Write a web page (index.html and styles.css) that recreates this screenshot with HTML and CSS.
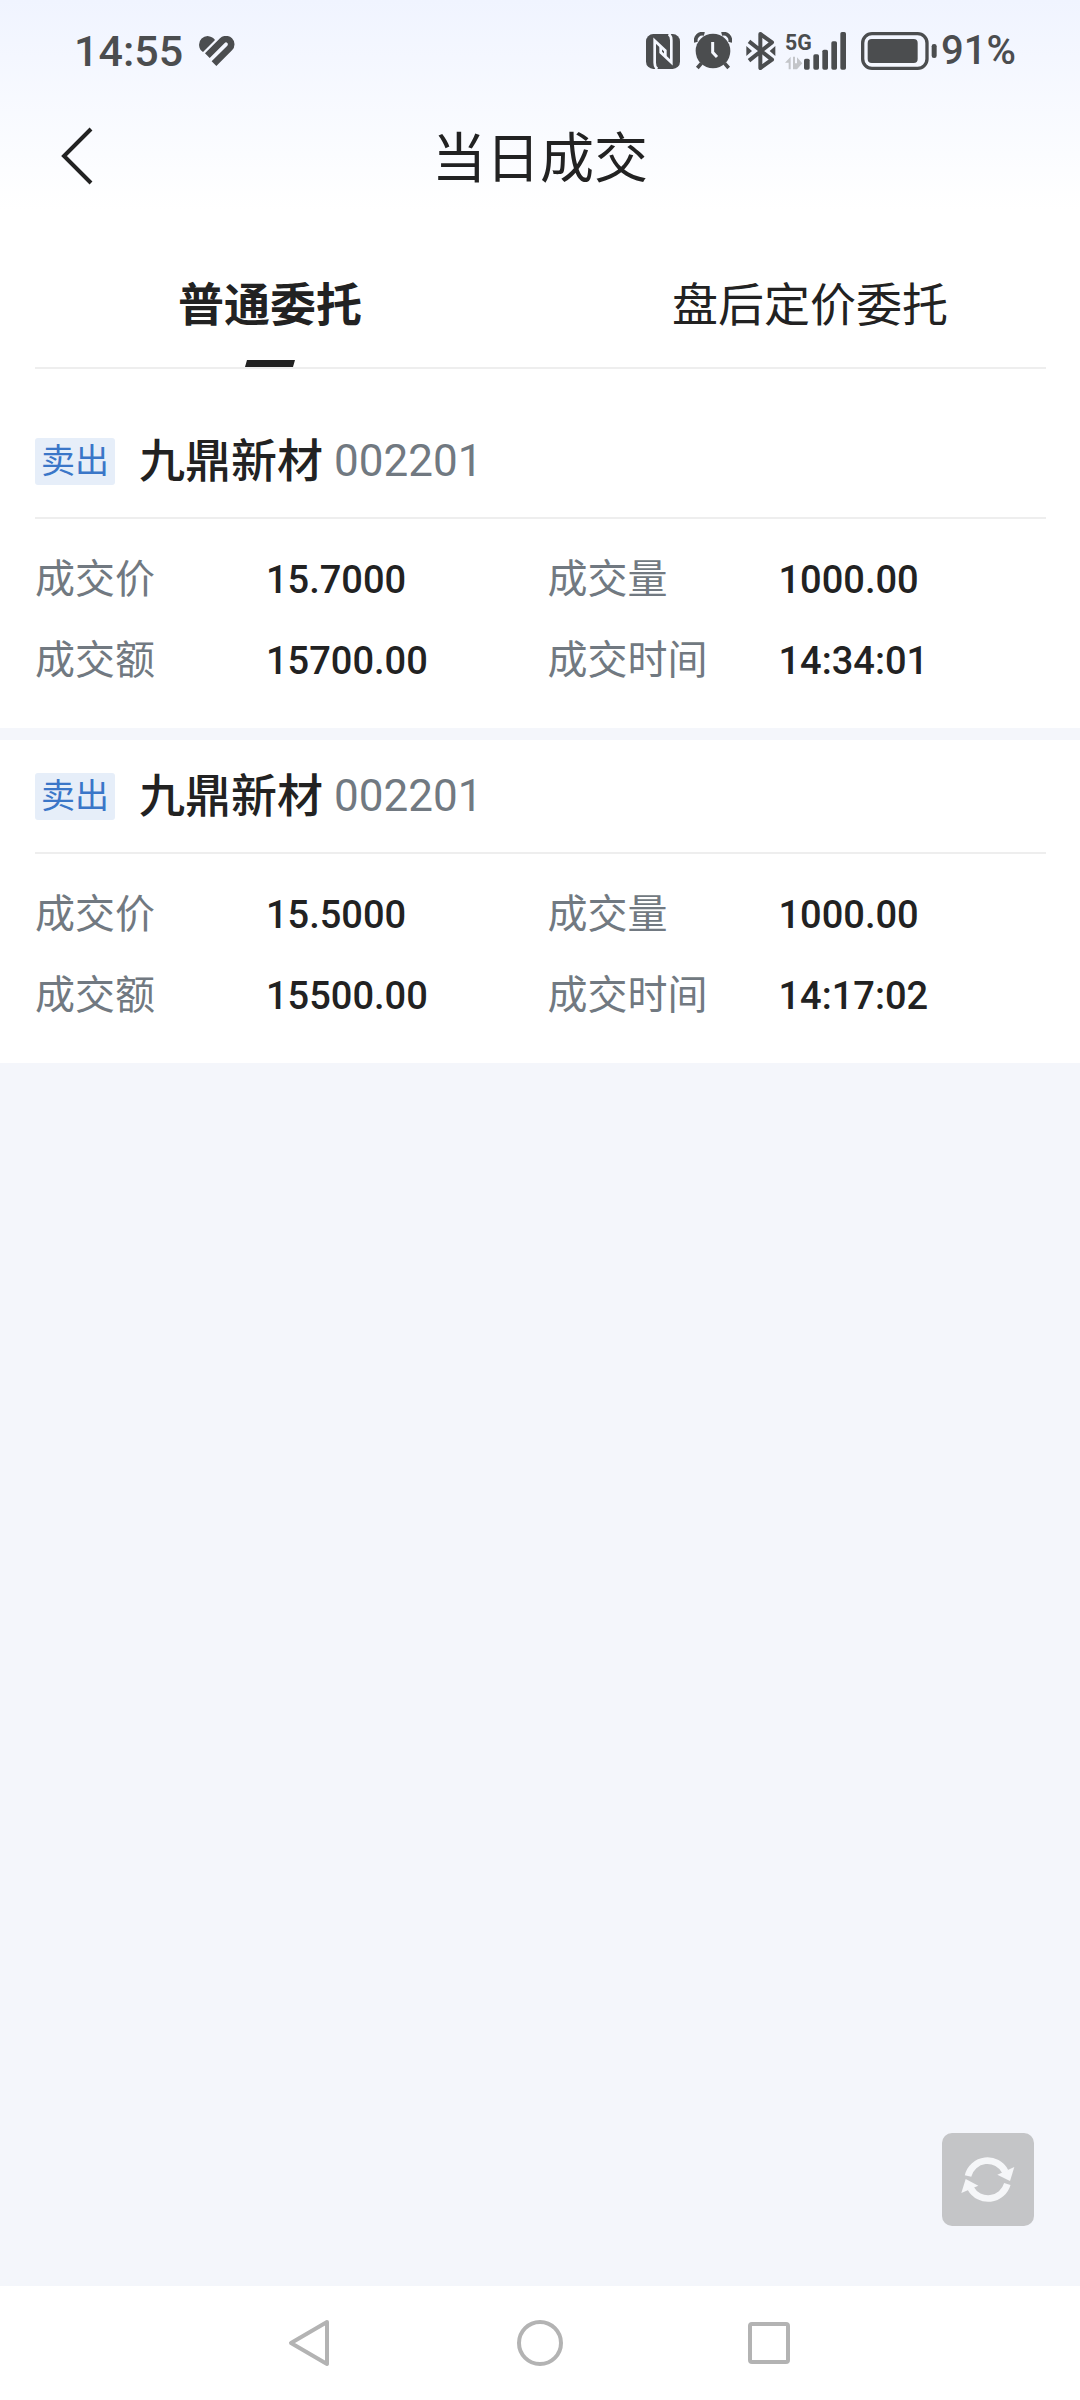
FILE: index.html
```html
<!DOCTYPE html>
<html lang="zh-CN">
<head>
    <meta charset="UTF-8">
    <meta name="viewport" content="width=device-width, initial-scale=1">
    <title>当日成交</title>
    <link rel="stylesheet" href="styles.css">
</head>
<body>
    <header class="top">
        <div class="status-bar">
            <div class="status-left">
                <span class="status-text">14:55</span>
                <svg class="icon-health" width="36" height="31" viewBox="0 0 108 93">
                    <path d="M12 48 A26 26 0 1 1 48 12 Z" fill="#4b4d4f"/>
                    <path d="M25 59 L70 14 A15.5 15.5 0 0 1 92 36 L45 83" fill="none" stroke="#4b4d4f" stroke-width="20"/>
                </svg>
            </div>
            <div class="status-right">
                <svg class="icon-nfc" width="34" height="35" viewBox="0 0 102 105">
                    <rect x="0" y="0" width="102" height="105" rx="22" fill="#4b4d4f"/>
                    <path d="M34 105 Q26 100 26 86 V20 L58 50 V68" fill="none" stroke="#f5f8ff" stroke-width="8"/>
                    <path d="M68 0 Q76 5 76 19 V85 L44 55 V37" fill="none" stroke="#f5f8ff" stroke-width="8"/>
                </svg>
                <svg class="icon-alarm" width="38" height="38" viewBox="0 0 114 114">
                    <circle cx="57" cy="57" r="52" fill="#4b4d4f"/>
                    <path d="M3 33 A20 20 0 0 1 33 3 M81 3 A20 20 0 0 1 111 33" fill="none" stroke="#f5f8ff" stroke-width="18"/>
                    <path d="M6 31 A20 20 0 0 1 31 6 M83 6 A20 20 0 0 1 108 31" fill="none" stroke="#4b4d4f" stroke-width="11"/>
                    <path d="M22 94 L10 108 M92 94 L104 108" stroke="#4b4d4f" stroke-width="11"/>
                    <path d="M56 30 V61 L69 75" fill="none" stroke="#f5f8ff" stroke-width="9"/>
                </svg>
                <svg class="icon-bluetooth" width="30" height="38" viewBox="0 0 90 114">
                    <path d="M9 28 L78 83 L43 108 V6 L78 31 L9 86" fill="none" stroke="#4b4d4f" stroke-width="12" stroke-linejoin="round"/>
                    <path d="M1 42 L18 57 L1 72 Z M88 42 L71 57 L88 72 Z" fill="#4b4d4f"/>
                </svg>
                <svg class="icon-signal" width="62" height="38" viewBox="0 0 186 114">
                    <text x="0" y="54" class="signal-label">5G</text>
                    <path d="M0 92 L17 74 V112 H11 V92 Z M24 74 H30 V94 H36 V76 L52 94 L36 112 H24 Z" fill="#c3c5c9"/>
                    <g fill="#4b4d4f">
                        <rect x="57" y="80" width="17" height="33" rx="5"/>
                        <rect x="85" y="67" width="17" height="46" rx="5"/>
                        <rect x="112" y="53" width="17" height="60" rx="5"/>
                        <rect x="139" y="28" width="17" height="85" rx="5"/>
                        <rect x="166" y="0" width="17" height="113" rx="5"/>
                    </g>
                </svg>
                <svg class="icon-battery" width="76" height="38" viewBox="0 0 228 114">
                    <rect x="5" y="5" width="193" height="104" rx="28" fill="none" stroke="#4b4d4f" stroke-width="10"/>
                    <rect x="20" y="21" width="150" height="72" rx="12" fill="#4b4d4f"/>
                    <rect x="212" y="36" width="15" height="42" rx="7" fill="#4b4d4f"/>
                </svg>
                <span class="status-text battery-text">91%</span>
            </div>
        </div>
        <div class="title-bar">
            <button class="back-btn" aria-label="返回">
                <svg width="34" height="58" viewBox="0 0 34 58">
                    <path d="M31 2 L4 29 L31 56" fill="none" stroke="#222" stroke-width="4"/>
                </svg>
            </button>
            <h1>当日成交</h1>
        </div>
    </header>

    <nav class="tabs">
        <button class="tab active">普通委托</button>
        <button class="tab">盘后定价委托</button>
    </nav>
    <hr class="line">

    <main class="content">
        <section class="card">
            <h2 class="card-head">
                <span class="badge">卖出</span>
                <span class="name">九鼎新材</span>
                <span class="code">002201</span>
            </h2>
            <dl class="details">
                <div class="item"><dt>成交价</dt><dd>15.7000</dd></div>
                <div class="item"><dt>成交量</dt><dd>1000.00</dd></div>
                <div class="item"><dt>成交额</dt><dd>15700.00</dd></div>
                <div class="item"><dt>成交时间</dt><dd>14:34:01</dd></div>
            </dl>
        </section>
        <section class="card">
            <h2 class="card-head">
                <span class="badge">卖出</span>
                <span class="name">九鼎新材</span>
                <span class="code">002201</span>
            </h2>
            <dl class="details">
                <div class="item"><dt>成交价</dt><dd>15.5000</dd></div>
                <div class="item"><dt>成交量</dt><dd>1000.00</dd></div>
                <div class="item"><dt>成交额</dt><dd>15500.00</dd></div>
                <div class="item"><dt>成交时间</dt><dd>14:17:02</dd></div>
            </dl>
        </section>
        <button class="refresh-btn" aria-label="刷新">
            <svg width="54" height="48" viewBox="0 0 162 144">
                <path d="M21 60 A60 60 0 0 1 133 47" fill="none" stroke="#f5f6f8" stroke-width="20"/>
                <path d="M109 56 L160 33 L147 75 Z" fill="#f5f6f8"/>
                <path d="M139 84 A60 60 0 0 1 29 97" fill="none" stroke="#f5f6f8" stroke-width="20"/>
                <path d="M52 89 L1 111 L14 69 Z" fill="#f5f6f8"/>
            </svg>
        </button>
    </main>

    <nav class="system-nav">
        <button aria-label="返回">
            <svg width="48" height="48" viewBox="0 0 48 48">
                <path d="M40 3 L4 24 L40 45 Z" fill="none" stroke="#b3b3b3" stroke-width="4" stroke-linejoin="round"/>
            </svg>
        </button>
        <button aria-label="主页">
            <svg width="48" height="48" viewBox="0 0 48 48">
                <circle cx="24" cy="24" r="21" fill="none" stroke="#b3b3b3" stroke-width="4"/>
            </svg>
        </button>
        <button aria-label="最近任务">
            <svg width="48" height="48" viewBox="0 0 48 48">
                <rect x="5" y="5" width="38" height="38" rx="2" fill="none" stroke="#b3b3b3" stroke-width="4"/>
            </svg>
        </button>
    </nav>
</body>
</html>
```
FILE: styles.css
```css
* {
    box-sizing: border-box;
}
body {
    display: flex;
    flex-direction: column;
    min-height: 100vh;
    margin: 0;
    font-family: Roboto, "Noto Sans CJK SC", sans-serif;
    color: #222;
    background: #fff;
}
button {
    padding: 0;
    border: none;
    background: none;
    font-family: inherit;
    color: inherit;
    cursor: pointer;
}
svg {
    display: block;
}
.top {
    background: linear-gradient(#f0f4ff, #fff);
}
.status-bar {
    display: flex;
    justify-content: space-between;
    align-items: center;
    height: 102px;
    padding: 0 64px 0 74px;
}
.status-left,
.status-right {
    display: flex;
    align-items: center;
}
.status-left {
    gap: 16px;
}
.status-right {
    gap: 14px;
}
.status-text {
    font-size: 43px;
    font-weight: 500;
    line-height: 50px;
    color: #4b4d4f;
}
.battery-text {
    font-size: 40px;
    margin-left: -10px;
}
.icon-signal {
    margin-left: -5px;
    overflow: visible;
}
.signal-label {
    font-size: 64px;
    font-weight: 700;
    fill: #4b4d4f;
}
.title-bar {
    display: grid;
    grid-template-columns: 120px 1fr 120px;
    align-items: center;
    height: 108px;
}
.back-btn {
    display: flex;
    justify-content: center;
    padding-left: 34px;
}
.title-bar h1 {
    margin: 0;
    padding-top: 8px;
    font-size: 54px;
    font-weight: 400;
    line-height: 80px;
    text-align: center;
}
.tabs {
    display: flex;
}
.tab {
    flex: 1;
    display: flex;
    flex-direction: column;
    align-items: center;
    height: 157px;
    padding-top: 61px;
    font-size: 46px;
    line-height: 68px;
}
.tab.active {
    font-weight: 700;
}
.tab.active::after {
    content: "";
    width: 48px;
    height: 7px;
    margin-top: auto;
    background: #222;
    transform: skewX(-16deg);
}
.line {
    height: 2px;
    margin: 0 34px 0 35px;
    border: none;
    background: #eee;
}
.content {
    position: relative;
    flex: 1;
    background: #f4f6fb;
}
.card {
    padding: 0 34px 0 35px;
    margin-bottom: 12px;
    background: #fff;
}
.card:first-child {
    padding-top: 36px;
}
.card-head {
    display: flex;
    align-items: center;
    height: 114px;
    margin: 0;
    border-bottom: 2px solid #eee;
    font-weight: 400;
}
.badge {
    padding: 0 6px;
    border-radius: 3px;
    background: #e6eef9;
    color: #3a76c8;
    font-size: 34px;
    line-height: 47px;
}
.name {
    margin-left: 24px;
    font-size: 46px;
    font-weight: 500;
    line-height: 68px;
}
.code {
    margin-left: 11px;
    font-size: 44px;
    line-height: 68px;
    color: #717981;
}
.details {
    display: grid;
    grid-template-columns: 1fr 1fr;
    gap: 21px 14px;
    margin: 0;
    padding: 31px 0 37px;
}
.item {
    display: flex;
    align-items: center;
}
.item dt {
    width: 231px;
    font-size: 40px;
    line-height: 60px;
    color: #717981;
}
.item dd {
    margin: 0;
    font-size: 38px;
    font-weight: 500;
    line-height: 60px;
}
.refresh-btn {
    position: absolute;
    right: 46px;
    bottom: 60px;
    display: flex;
    justify-content: center;
    align-items: center;
    width: 92px;
    height: 93px;
    border-radius: 10px;
    background: #c4c5c7;
}
.system-nav {
    display: flex;
    justify-content: center;
    gap: 120px;
    height: 114px;
    background: #fff;
}
.system-nav button {
    display: flex;
    justify-content: center;
    align-items: center;
    width: 109px;
}
```
